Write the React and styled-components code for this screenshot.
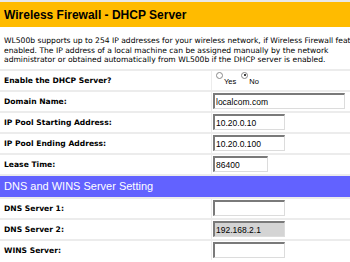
import React from "react";
import styled, { createGlobalStyle } from "styled-components";

const Global = createGlobalStyle`
  html, body {
    margin: 0;
    padding: 0;
    background: #ffffff;
    overflow: hidden;
  }
`;

const Page = styled.div`
  width: 400px;
  font-family: "DejaVu Sans", Verdana, sans-serif;
  color: #000;
`;

const TitleBar = styled.div`
  background: #ffbb00;
  border-top: 2px solid #e8e8e8;
  height: 25px;
  display: flex;
  align-items: center;
  padding-left: 4px;
  font-family: "Liberation Sans", Arial, sans-serif;
  font-weight: bold;
  font-size: 12px;
`;

const Intro = styled.div`
  padding: 9px 4px 4px;
  font-size: 7.6px;
  line-height: 9.5px;
  white-space: nowrap;
  border-bottom: 2px solid #ececec;
`;

const Form = styled.div`
  display: grid;
  grid-template-columns: 211px 1fr;
  row-gap: 2px;
  column-gap: 1px;
  background: #ececec;
`;

const Label = styled.div`
  background: #fff;
  height: 19px;
  display: flex;
  align-items: center;
  padding-left: 4px;
  font-size: 7.6px;
  font-weight: bold;
`;

const Value = styled.div`
  background: #fff;
  height: 19px;
  display: flex;
  align-items: center;
  padding-left: 1px;
`;

const Section = styled.div`
  grid-column: 1 / -1;
  background: #6262ff;
  color: #fff;
  height: 21px;
  display: flex;
  align-items: center;
  padding-left: 4px;
  font-family: "Liberation Sans", Arial, sans-serif;
  font-size: 11px;
`;

const Field = styled.input`
  box-sizing: border-box;
  width: ${p => p.$w}px;
  height: 16px;
  margin: 0;
  padding: 0 1px;
  border-style: solid;
  border-width: 2px 1px 1px 2px;
  border-top-color: #7a7a7a;
  border-left-color: #7a7a7a;
  border-bottom-color: #dcdcdc;
  border-right-color: #dcdcdc;
  background: ${p => (p.readOnly ? "#d4d4d4" : "#fff")};
  font-family: "Liberation Sans", Arial, sans-serif;
  font-size: 8.5px;
  color: #000;
  outline: none;
`;

const Radios = styled.div`
  display: flex;
  align-items: flex-start;
  padding-left: 3px;
  font-family: "Liberation Sans", Arial, sans-serif;
  font-size: 7.5px;
  gap: 1px;
`;

const Radio = styled.span`
  box-sizing: border-box;
  width: 7px;
  height: 7px;
  border-radius: 50%;
  border: 1px solid #8a8a8a;
  background: #fff;
  position: relative;
  margin-top: -3px;
  &::after {
    content: "";
    display: ${p => (p.$on ? "block" : "none")};
    position: absolute;
    left: 1.5px;
    top: 1.5px;
    width: 2px;
    height: 2px;
    border-radius: 50%;
    background: #000;
  }
`;

const RadioText = styled.span`
  margin-top: 2px;
  margin-right: 4px;
`;

export default function App() {
  return (
    <Page>
      <Global />
      <TitleBar>Wireless Firewall - DHCP Server</TitleBar>
      <Intro>
        WL500b supports up to 254 IP addresses for your wireless network, if Wireless Firewall feature is
        <br />
        enabled. The IP address of a local machine can be assigned manually by the network
        <br />
        administrator or obtained automatically from WL500b if the DHCP server is enabled.
      </Intro>
      <Form>
        <Label>Enable the DHCP Server?</Label>
        <Value>
          <Radios>
            <Radio />
            <RadioText>Yes</RadioText>
            <Radio $on />
            <RadioText>No</RadioText>
          </Radios>
        </Value>
        <Label>Domain Name:</Label>
        <Value>
          <Field $w={132} defaultValue="localcom.com" />
        </Value>
        <Label>IP Pool Starting Address:</Label>
        <Value>
          <Field $w={72} defaultValue="10.20.0.10" />
        </Value>
        <Label>IP Pool Ending Address:</Label>
        <Value>
          <Field $w={72} defaultValue="10.20.0.100" />
        </Value>
        <Label>Lease Time:</Label>
        <Value>
          <Field $w={55} defaultValue="86400" />
        </Value>
        <Section>DNS and WINS Server Setting</Section>
        <Label>DNS Server 1:</Label>
        <Value>
          <Field $w={72} defaultValue="" />
        </Value>
        <Label>DNS Server 2:</Label>
        <Value>
          <Field $w={72} defaultValue="192.168.2.1" readOnly />
        </Value>
        <Label>WINS Server:</Label>
        <Value>
          <Field $w={72} defaultValue="" />
        </Value>
      </Form>
    </Page>
  );
}
